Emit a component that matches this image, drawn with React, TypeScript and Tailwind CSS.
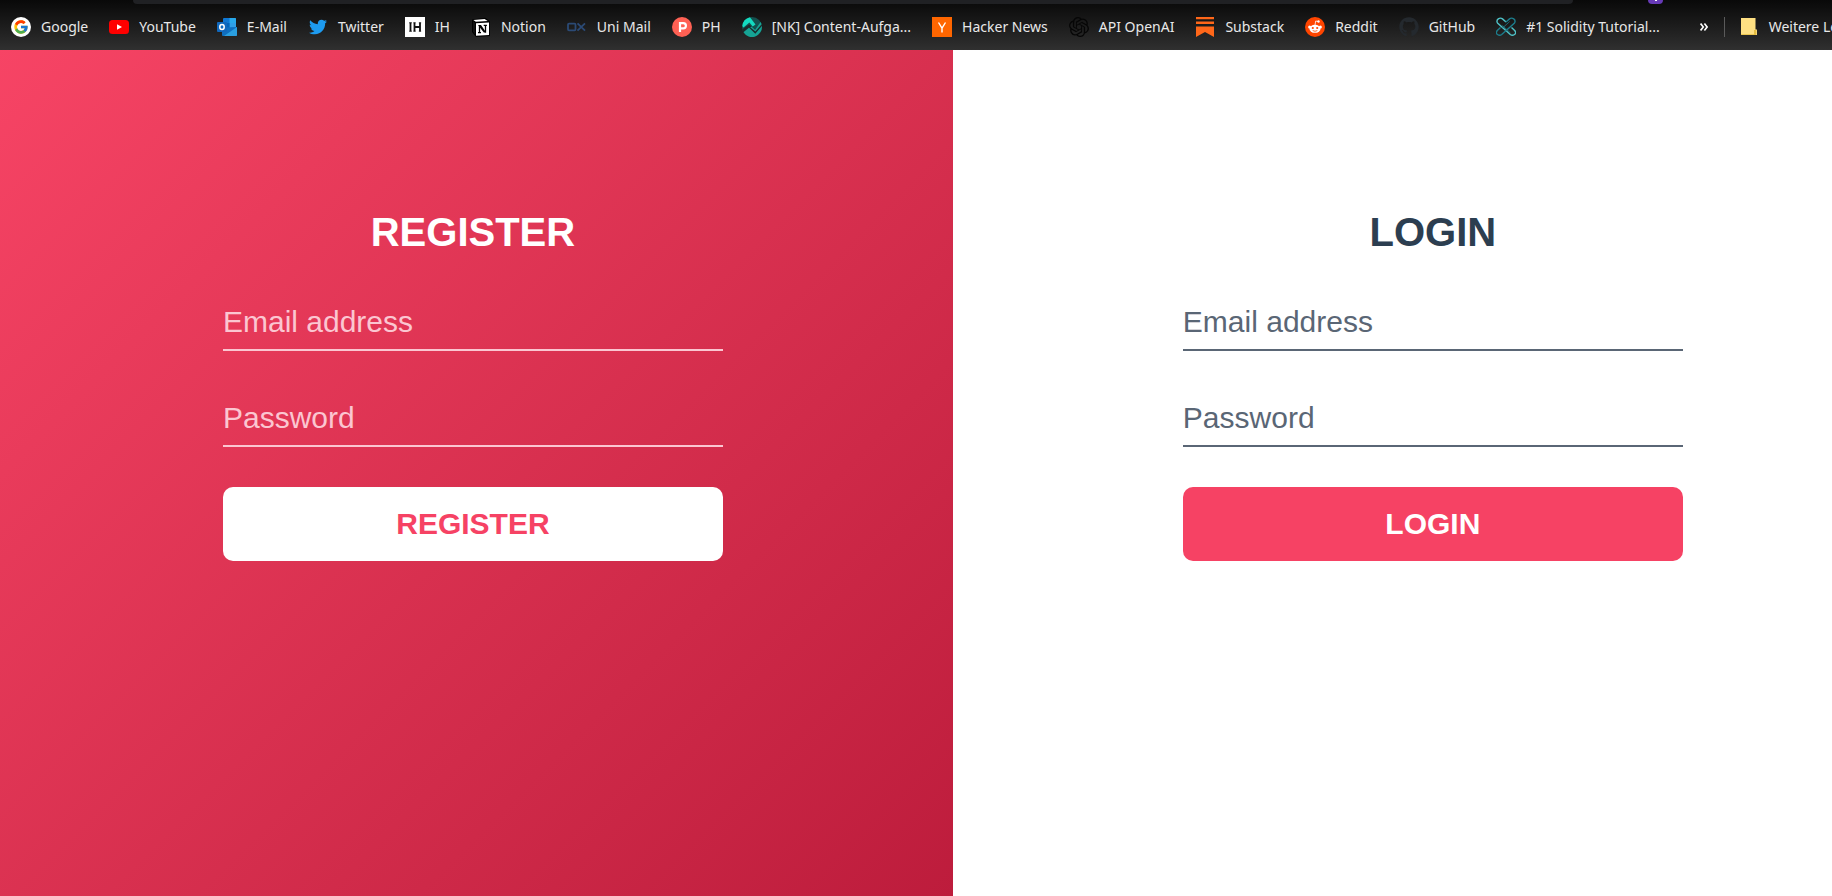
import type { ReactNode } from "react";
import { FcGoogle } from "react-icons/fc";
import { FaTwitter, FaGithub } from "react-icons/fa";
import { SiOpenai } from "react-icons/si";

const icons: Record<string, ReactNode> = {
  google: (
    <span className="flex size-5 items-center justify-center rounded-full bg-white">
      <FcGoogle className="size-4" />
    </span>
  ),
  youtube: (
    <svg viewBox="0 0 20 20" className="size-5">
      <rect x="0" y="3" width="20" height="14" rx="3.5" fill="#ff0000" />
      <path d="M8 7.2v5.6l5-2.8z" fill="#fff" />
    </svg>
  ),
  outlook: (
    <svg viewBox="0 0 20 20" className="size-5">
      <rect x="6" y="1" width="13" height="12" rx="1" fill="#0f78d4" />
      <path d="M12.5 1H18a1 1 0 0 1 1 1v4h-6.5z" fill="#28a8ea" />
      <path d="M12.500 6H19v5h-6.500z" fill="#2f9fe6" />
      <path d="M6 6h6.500v5H6z" fill="#0364b8" />
      <path d="M5 10.500 20 10v8a1 1 0 0 1-1 1H6a1 1 0 0 1-1-1z" fill="#0f6fc0" />
      <path d="M20 10v8a1 1 0 0 1-1 1H7z" fill="#2a9fe0" />
      <rect x="0" y="5" width="10" height="10" rx="1" fill="#1068bd" />
      <ellipse cx="5" cy="10" rx="2.200" ry="2.500" fill="none" stroke="#fff" strokeWidth="1.500" />
    </svg>
  ),
  twitter: <FaTwitter className="size-[18px] text-[#1d9bf0]" />,
  ih: (
    <svg viewBox="0 0 20 20" className="size-5">
      <rect width="20" height="20" fill="#fff" />
      <path d="M5.500 5.500v9M9.500 5.500v9M15 5.500v9M9.500 10H15" stroke="#111" strokeWidth="1.800" />
      <path d="M4 5.800h3M4 14.200h3M8.300 5.800h2.400M8.300 14.200h2.400M13.800 5.800h2.400M13.800 14.200h2.400" stroke="#111" strokeWidth=".7" />
    </svg>
  ),
  notion: (
    <svg viewBox="0 0 20 20" className="size-5">
      <path d="M1 2.500 14 .8l5 3.300V19L5 20l-4-5z" fill="#000" />
      <path d="M2.300 2.900 13.600 2l3 2-11.800.8z" fill="#fff" />
      <path d="M5 6.200 18 5.400v12.500L5 18.700z" fill="#fff" />
      <path d="M2 4.200 4 6v11.300l-2-2.700z" fill="#111" />
      <path d="M8.500 8.600v7M7 15.700h3M14.500 8.300v7.200M12.700 8.300h3.200" fill="none" stroke="#000" strokeWidth="1.300" />
      <path d="M7 8h3l5.200 7.600h-2.400z" fill="#000" />
    </svg>
  ),
  ox: (
    <svg viewBox="0 0 20 20" className="size-5" fill="none" stroke="#2b4a75" strokeWidth="1.800">
      <rect x="1" y="6.700" width="7.500" height="6.600" rx="1" />
      <path d="m10.500 6.300 7.500 7.400M18 6.300l-7.500 7.400" />
    </svg>
  ),
  ph: (
    <svg viewBox="0 0 20 20" className="size-5">
      <circle cx="10" cy="10" r="10" fill="#ff6154" />
      <path d="M8 15V6.200h3.300a2.600 2.600 0 0 1 0 5.200H8" fill="none" stroke="#fff" strokeWidth="2.200" />
    </svg>
  ),
  nk: (
    <svg viewBox="0 0 20 20" className="size-5">
      <circle cx="10" cy="10" r="10" fill="#14514f" />
      <path d="M.3 9A10 10 0 0 1 8 .2L13.500 7.500 10.700 9.600 7.400 5.500 1.500 10.500z" fill="#14dbc0" />
      <path d="M13.300 12.500 19 5.500l.9 3.500-6.400 8L7 10.500 1 15.500l-.7-3 6.700-5z" fill="#1b2a2a" />
      <path d="m1.500 15.300 5.500-4.500 6.300 6L19.900 9A10 10 0 0 1 1.500 15.300z" fill="#16a394" />
      <path d="m9.500 9.500 3.600 3.200L18.600 5l1 2.200-6.200 7.400-5.200-4.400z" fill="#16a394" />
    </svg>
  ),
  hn: (
    <svg viewBox="0 0 20 20" className="size-5">
      <rect width="20" height="20" fill="#ff6600" />
      <path d="m6.500 5.500 3.500 5.700 3.500-5.700M10 11v4.500" fill="none" stroke="#fff" strokeWidth="1.400" />
    </svg>
  ),
  openai: <SiOpenai className="size-5 text-[#060606]" />,
  substack: (
    <svg viewBox="0 0 20 20" className="size-5" fill="#ff6719">
      <path d="M1 0h18v2.300H1zM1 4.600h18v2.300H1zM1 9.400h18V20l-9-5-9 5z" />
    </svg>
  ),
  reddit: (
    <svg viewBox="0 0 20 20" className="size-5">
      <circle cx="10" cy="10" r="10" fill="#ff4500" />
      <g fill="#fff">
        <ellipse cx="10" cy="11.800" rx="5.600" ry="4" />
        <circle cx="4.600" cy="10" r="1.500" />
        <circle cx="15.400" cy="10" r="1.500" />
        <circle cx="13.500" cy="4.500" r="1.200" />
      </g>
      <path d="m10 8 .7-4 2.800.6" fill="none" stroke="#fff" strokeWidth=".8" />
      <circle cx="7.800" cy="11" r="1.100" fill="#ff4500" />
      <circle cx="12.200" cy="11" r="1.100" fill="#ff4500" />
      <path d="M7.700 13.600q2.300 1.300 4.600 0" fill="none" stroke="#ff4500" strokeWidth=".8" />
    </svg>
  ),
  github: <FaGithub className="size-5 text-[#24292e]" />,
  solidity: (
    <svg viewBox="0 0 20 20" className="size-5" fill="none" strokeWidth="1.400">
      <path d="M10 5 6.500 1.900Q4.500.3 2.300 1.900T1.500 6L14.300 17.500q2 1.600 4.200 0T18.700 13.500L15.500 10.500" stroke="#4fc3c8" />
      <path d="m10 5 3.500-3.100q2-1.600 4.200 0T18.500 6L5.700 17.500q-2 1.600-4.200 0T1.300 13.500L4.500 10.500" stroke="#1c7d8c" />
      <path d="m6.300 8.500 8 7.200M13.700 4.500 6 11.500" stroke="#1c7d8c" strokeWidth=".8" />
    </svg>
  ),
};

const bookmarks = [
  { icon: "google", label: "Google" },
  { icon: "youtube", label: "YouTube" },
  { icon: "outlook", label: "E-Mail" },
  { icon: "twitter", label: "Twitter" },
  { icon: "ih", label: "IH" },
  { icon: "notion", label: "Notion" },
  { icon: "ox", label: "Uni Mail" },
  { icon: "ph", label: "PH" },
  { icon: "nk", label: "[NK] Content-Aufga..." },
  { icon: "hn", label: "Hacker News" },
  { icon: "openai", label: "API OpenAI" },
  { icon: "substack", label: "Substack" },
  { icon: "reddit", label: "Reddit" },
  { icon: "github", label: "GitHub" },
  { icon: "solidity", label: "#1 Solidity Tutorial..." },
];

function BookmarkBar() {
  return (
    <header className="h-[50px] overflow-hidden bg-linear-to-b from-[#090909] to-[#303030] font-['Noto_Sans',sans-serif] text-sm text-[#e8e8e8]">
      <div className="flex h-1 pl-[133px]">
        <div className="w-[1440px] shrink-0 rounded-b-full bg-[#202124]" />
        <div className="ml-[75px] flex w-[15px] shrink-0 justify-center rounded-b-sm bg-[#673ab7]">
          <span className="h-px w-0.5 bg-white" />
        </div>
      </div>
      <nav className="flex h-[46px] items-center pl-[11px] whitespace-nowrap">
        <div className="flex shrink-0 items-center gap-[21px]">
          {bookmarks.map(({ icon, label }) => (
            <a key={label} href="#" className="flex shrink-0 items-center gap-2.5">
              <span className="flex size-5 items-center justify-center">{icons[icon]}</span>
              {label}
            </a>
          ))}
        </div>
        <div className="flex shrink-0 items-center gap-4 pl-10">
          <button type="button" aria-label="More bookmarks">
            <svg viewBox="0 0 8 8" className="size-2" fill="none" stroke="#fff" strokeWidth="1.600">
              <path d="m.6.6 2.700 3.400L.6 7.400M4.400.6 7.100 4 4.400 7.400" />
            </svg>
          </button>
          <div className="h-5 w-px bg-[#5a5a5a]" />
          <a href="#" className="flex items-center gap-3">
            <svg viewBox="0 0 16 18" className="h-[18px] w-4">
              <path d="M0 0h14.500v11.500H16V17H0z" fill="#ffe082" />
              <path d="M0 16.200h13V12h2.300v5H0z" fill="#e5bd42" />
            </svg>
            Weitere Lesezeichen
          </a>
        </div>
      </nav>
    </header>
  );
}

type AuthFormProps = {
  title: string;
  id: string;
  headingClass: string;
  inputClass: string;
  buttonClass: string;
};

function AuthForm({ title, id, headingClass, inputClass, buttonClass }: AuthFormProps) {
  const field = `h-14 w-full border-b-2 bg-transparent py-2.5 text-[30px] leading-[34px] outline-none placeholder:opacity-100 ${inputClass}`;
  return (
    <form className="flex w-[500px] flex-col gap-10" onSubmit={(e) => e.preventDefault()}>
      <h1 className={`text-center text-[40px] leading-[45px] font-bold uppercase ${headingClass}`}>{title}</h1>
      <input id={`${id}-email`} type="email" aria-label="Email address" placeholder="Email address" className={field} />
      <input id={`${id}-password`} type="password" aria-label="Password" placeholder="Password" className={field} />
      <button
        type="submit"
        className={`w-full rounded-[10px] py-5 text-[30px] leading-[34px] font-bold uppercase ${buttonClass}`}
      >
        {title}
      </button>
    </form>
  );
}

export default function App() {
  return (
    <div className="flex min-h-screen flex-col overflow-hidden bg-white">
      <BookmarkBar />
      <main className="-mx-[7px] flex grow font-['Liberation_Sans',Arial,sans-serif]">
        <section className="flex w-[52%] max-w-[960px] shrink-0 justify-center bg-linear-135 from-[#f74465] to-[#bd1c3c] pt-40">
          <AuthForm
            title="Register"
            id="register"
            headingClass="text-white"
            inputClass="border-[#fbc6d1] text-white placeholder:text-[#fbc6d1]"
            buttonClass="bg-white text-[#f64264]"
          />
        </section>
        <section className="flex w-[52%] max-w-[960px] shrink-0 justify-center bg-white pt-40">
          <AuthForm
            title="Login"
            id="login"
            headingClass="text-[#2c3e50]"
            inputClass="border-[#5a6675] text-[#2c3e50] placeholder:text-[#5a6675]"
            buttonClass="bg-[#f64264] text-white"
          />
        </section>
      </main>
    </div>
  );
}
